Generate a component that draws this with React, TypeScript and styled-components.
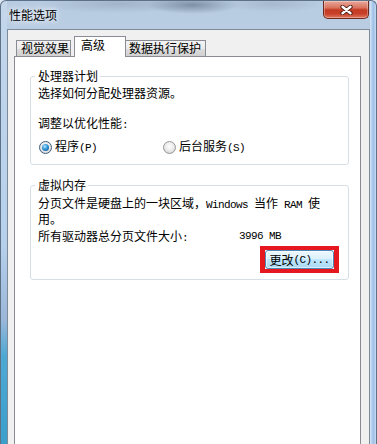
import React from 'react';
import styled, { createGlobalStyle } from 'styled-components';

const GlobalStyle = createGlobalStyle`
    html,
    body {
        margin: 0;
        padding: 0;
        background: #dfe8f1;
    }

    body {
        font-family: 'Noto Sans CJK SC', 'Noto Sans', sans-serif;
        font-size: 12px;
        line-height: 14px;
        color: #000;
    }

    * {
        box-sizing: border-box;
    }
`;

const Window = styled.div`
    width: 377px;
    height: 444px;
    display: flex;
    flex-direction: column;
    overflow: hidden;
    border: 1px solid #5d7187;
    border-bottom: none;
    border-radius: 6px 6px 0 0;
    background:
        linear-gradient(to bottom, #c3d6ea 0%, #b6d0ec 55%, #9ab7d8 72%, #4ea8d4 80%, #3b9fcc 100%) left top / 6px 100% no-repeat,
        linear-gradient(to right, #d6e6f6 0%, #9ebfe6 55%, #c5dbf2 100%) right top / 6px 100% no-repeat,
        radial-gradient(ellipse 46px 9px at 192px 4px, rgba(80, 96, 118, 0.55), transparent),
        radial-gradient(ellipse 80px 9px at 118px 3px, rgba(120, 136, 156, 0.35), transparent),
        radial-gradient(ellipse 50px 8px at 272px 3px, rgba(128, 142, 160, 0.3), transparent),
        linear-gradient(to bottom, #b7cbe1 0%, #c8d9ec 45%, #cfdff0 100%);
`;

const TitleBar = styled.div`
    height: 28px;
    display: flex;
    align-items: flex-start;
    padding-left: 8px;
`;

const Caption = styled.div`
    margin-top: 7px;
    text-shadow: 0 0 5px rgba(255, 255, 255, 0.95), 0 0 9px rgba(255, 255, 255, 0.8);
`;

const CloseButton = styled.div`
    margin-left: auto;
    margin-right: 7px;
    width: 46px;
    height: 18px;
    display: flex;
    align-items: center;
    justify-content: center;
    border: 1px solid #6c2a20;
    border-top: none;
    border-radius: 0 0 5px 5px;
    background: linear-gradient(to bottom, #e9a99b 0%, #d9735f 40%, #c43b22 52%, #c8402a 75%, #e1785e 100%);
    box-shadow: inset 0 0 0 1px rgba(255, 255, 255, 0.3);
`;

const Client = styled.div`
    flex: 1;
    display: flex;
    flex-direction: column;
    margin: 0 6px;
    padding: 6px 8px 0 6px;
    border: 1px solid #7d8a98;
    border-bottom: none;
    background: #f0f0f0;
`;

const TabStrip = styled.div`
    height: 20px;
    display: flex;
    align-items: flex-end;
    padding-left: 2px;
    position: relative;
    z-index: 1;
`;

const Tab = styled.div<{ $active?: boolean; $width: number; $inset: number }>`
    width: ${(p) => p.$width}px;
    padding-left: ${(p) => p.$inset}px;
    border: 1px solid #898c95;
    border-bottom: none;
    white-space: nowrap;
    ${(p) =>
        p.$active
            ? `
        height: 21px;
        margin: 0 -1px -1px 3px;
        padding-top: 1px;
        background: #fff;
        position: relative;
        z-index: 1;
    `
            : `
        height: 16px;
        background: linear-gradient(to bottom, #f3f3f3 0%, #ebebeb 50%, #dedede 50%, #d0d0d0 100%);
    `}
`;

const Panel = styled.div`
    flex: 1;
    display: flex;
    flex-direction: column;
    padding: 12px 11px 0 15px;
    border: 1px solid #898c95;
    border-bottom: none;
    background: #fff;
`;

const GroupBox = styled.fieldset<{ $gap?: number; $padTop: number; $padBottom: number }>`
    margin: ${(p) => p.$gap ?? 0}px 0 0;
    padding: ${(p) => p.$padTop}px 9px ${(p) => p.$padBottom}px 7px;
    min-width: 0;
    border: 1px solid #d5dfe5;
    border-radius: 3px;
`;

const GroupTitle = styled.legend`
    margin-left: -3px;
    padding: 0 2px 0 3px;
    line-height: 14px;
`;

const Line = styled.div<{ $gap?: number; $lh?: number }>`
    margin-top: ${(p) => p.$gap ?? 0}px;
    line-height: ${(p) => p.$lh ?? 14}px;
    white-space: nowrap;
`;

const Latin = styled.span`
    font-family: 'Liberation Mono', 'DejaVu Sans Mono', monospace;
    font-size: 11px;
    letter-spacing: -0.6px;
`;

const RadioRow = styled.div`
    margin-top: 7px;
    display: grid;
    grid-template-columns: 124px auto;
    align-items: center;
    height: 14px;
`;

const RadioOption = styled.label`
    display: flex;
    align-items: center;
    gap: 3px;
    white-space: nowrap;
`;

const RadioCircle = styled.span<{ $checked?: boolean }>`
    flex: none;
    width: 13px;
    height: 13px;
    margin-left: 1px;
    display: grid;
    place-items: center;
    border-radius: 50%;
    border: 1px solid ${(p) => (p.$checked ? '#3d5e7e' : '#979797')};
    background: radial-gradient(circle at 50% 40%, #ffffff 0%, #e8e8e8 55%, #c4c4c4 100%);

    &::after {
        content: '';
        display: ${(p) => (p.$checked ? 'block' : 'none')};
        width: 7px;
        height: 7px;
        border-radius: 50%;
        background: radial-gradient(circle at 40% 35%, #b3e6fd 0%, #3094d8 45%, #0d4c88 100%);
    }
`;

const SizeRow = styled.div`
    margin-top: 4px;
    display: grid;
    grid-template-columns: 201px auto;
    white-space: nowrap;
`;

const ButtonRow = styled.div`
    margin-top: 1px;
    display: flex;
    justify-content: flex-end;
`;

const Highlight = styled.div`
    border: 5px solid #e5171f;
    border-top-width: 4px;
    border-bottom-width: 4px;
`;

const Button = styled.button`
    width: 69px;
    height: 19px;
    padding: 0;
    display: flex;
    align-items: center;
    justify-content: center;
    font: inherit;
    line-height: 14px;
    color: #000;
    border: 1px solid #4f86b3;
    border-radius: 3px;
    background: linear-gradient(to bottom, #eef8fe 0%, #dbf1fc 45%, #c0e7fd 50%, #a9daf5 100%);
    box-shadow: inset 0 0 0 1px rgba(255, 255, 255, 0.55);
`;

const CloseGlyph = () => (
    <svg width="13" height="10" viewBox="0 0 13 10">
        <path d="M2.5 1.8 L10.5 8.2 M10.5 1.8 L2.5 8.2" stroke="#4a1a12" strokeWidth="4.2" strokeLinecap="round" />
        <path d="M2.5 1.8 L10.5 8.2 M10.5 1.8 L2.5 8.2" stroke="#ffffff" strokeWidth="2.4" strokeLinecap="round" />
    </svg>
);

export default function App() {
    return (
        <>
            <GlobalStyle />
            <Window>
                <TitleBar>
                    <Caption>性能选项</Caption>
                    <CloseButton>
                        <CloseGlyph />
                    </CloseButton>
                </TitleBar>
                <Client>
                    <TabStrip>
                        <Tab $width={55} $inset={4}>视觉效果</Tab>
                        <Tab $active $width={52} $inset={6}>高级</Tab>
                        <Tab $width={81} $inset={3}>数据执行保护</Tab>
                    </TabStrip>
                    <Panel>
                        <GroupBox $padTop={3} $padBottom={11}>
                            <GroupTitle>处理器计划</GroupTitle>
                            <Line>选择如何分配处理器资源。</Line>
                            <Line $gap={16}>
                                调整以优化性能<Latin>:</Latin>
                            </Line>
                            <RadioRow>
                                <RadioOption>
                                    <RadioCircle $checked />
                                    <span>
                                        程序<Latin>(P)</Latin>
                                    </span>
                                </RadioOption>
                                <RadioOption>
                                    <RadioCircle />
                                    <span>
                                        后台服务<Latin>(S)</Latin>
                                    </span>
                                </RadioOption>
                            </RadioRow>
                        </GroupBox>

                        <GroupBox $gap={13} $padTop={4} $padBottom={6}>
                            <GroupTitle>虚拟内存</GroupTitle>
                            <Line $lh={13}>
                                分页文件是硬盘上的一块区域，<Latin>Windows </Latin>当作<Latin> RAM </Latin>使
                                <br />
                                用。
                            </Line>
                            <SizeRow>
                                <span>
                                    所有驱动器总分页文件大小<Latin>:</Latin>
                                </span>
                                <Latin>3996 MB</Latin>
                            </SizeRow>
                            <ButtonRow>
                                <Highlight>
                                    <Button>
                                        更改<Latin>(C)...</Latin>
                                    </Button>
                                </Highlight>
                            </ButtonRow>
                        </GroupBox>
                    </Panel>
                </Client>
            </Window>
        </>
    );
}
